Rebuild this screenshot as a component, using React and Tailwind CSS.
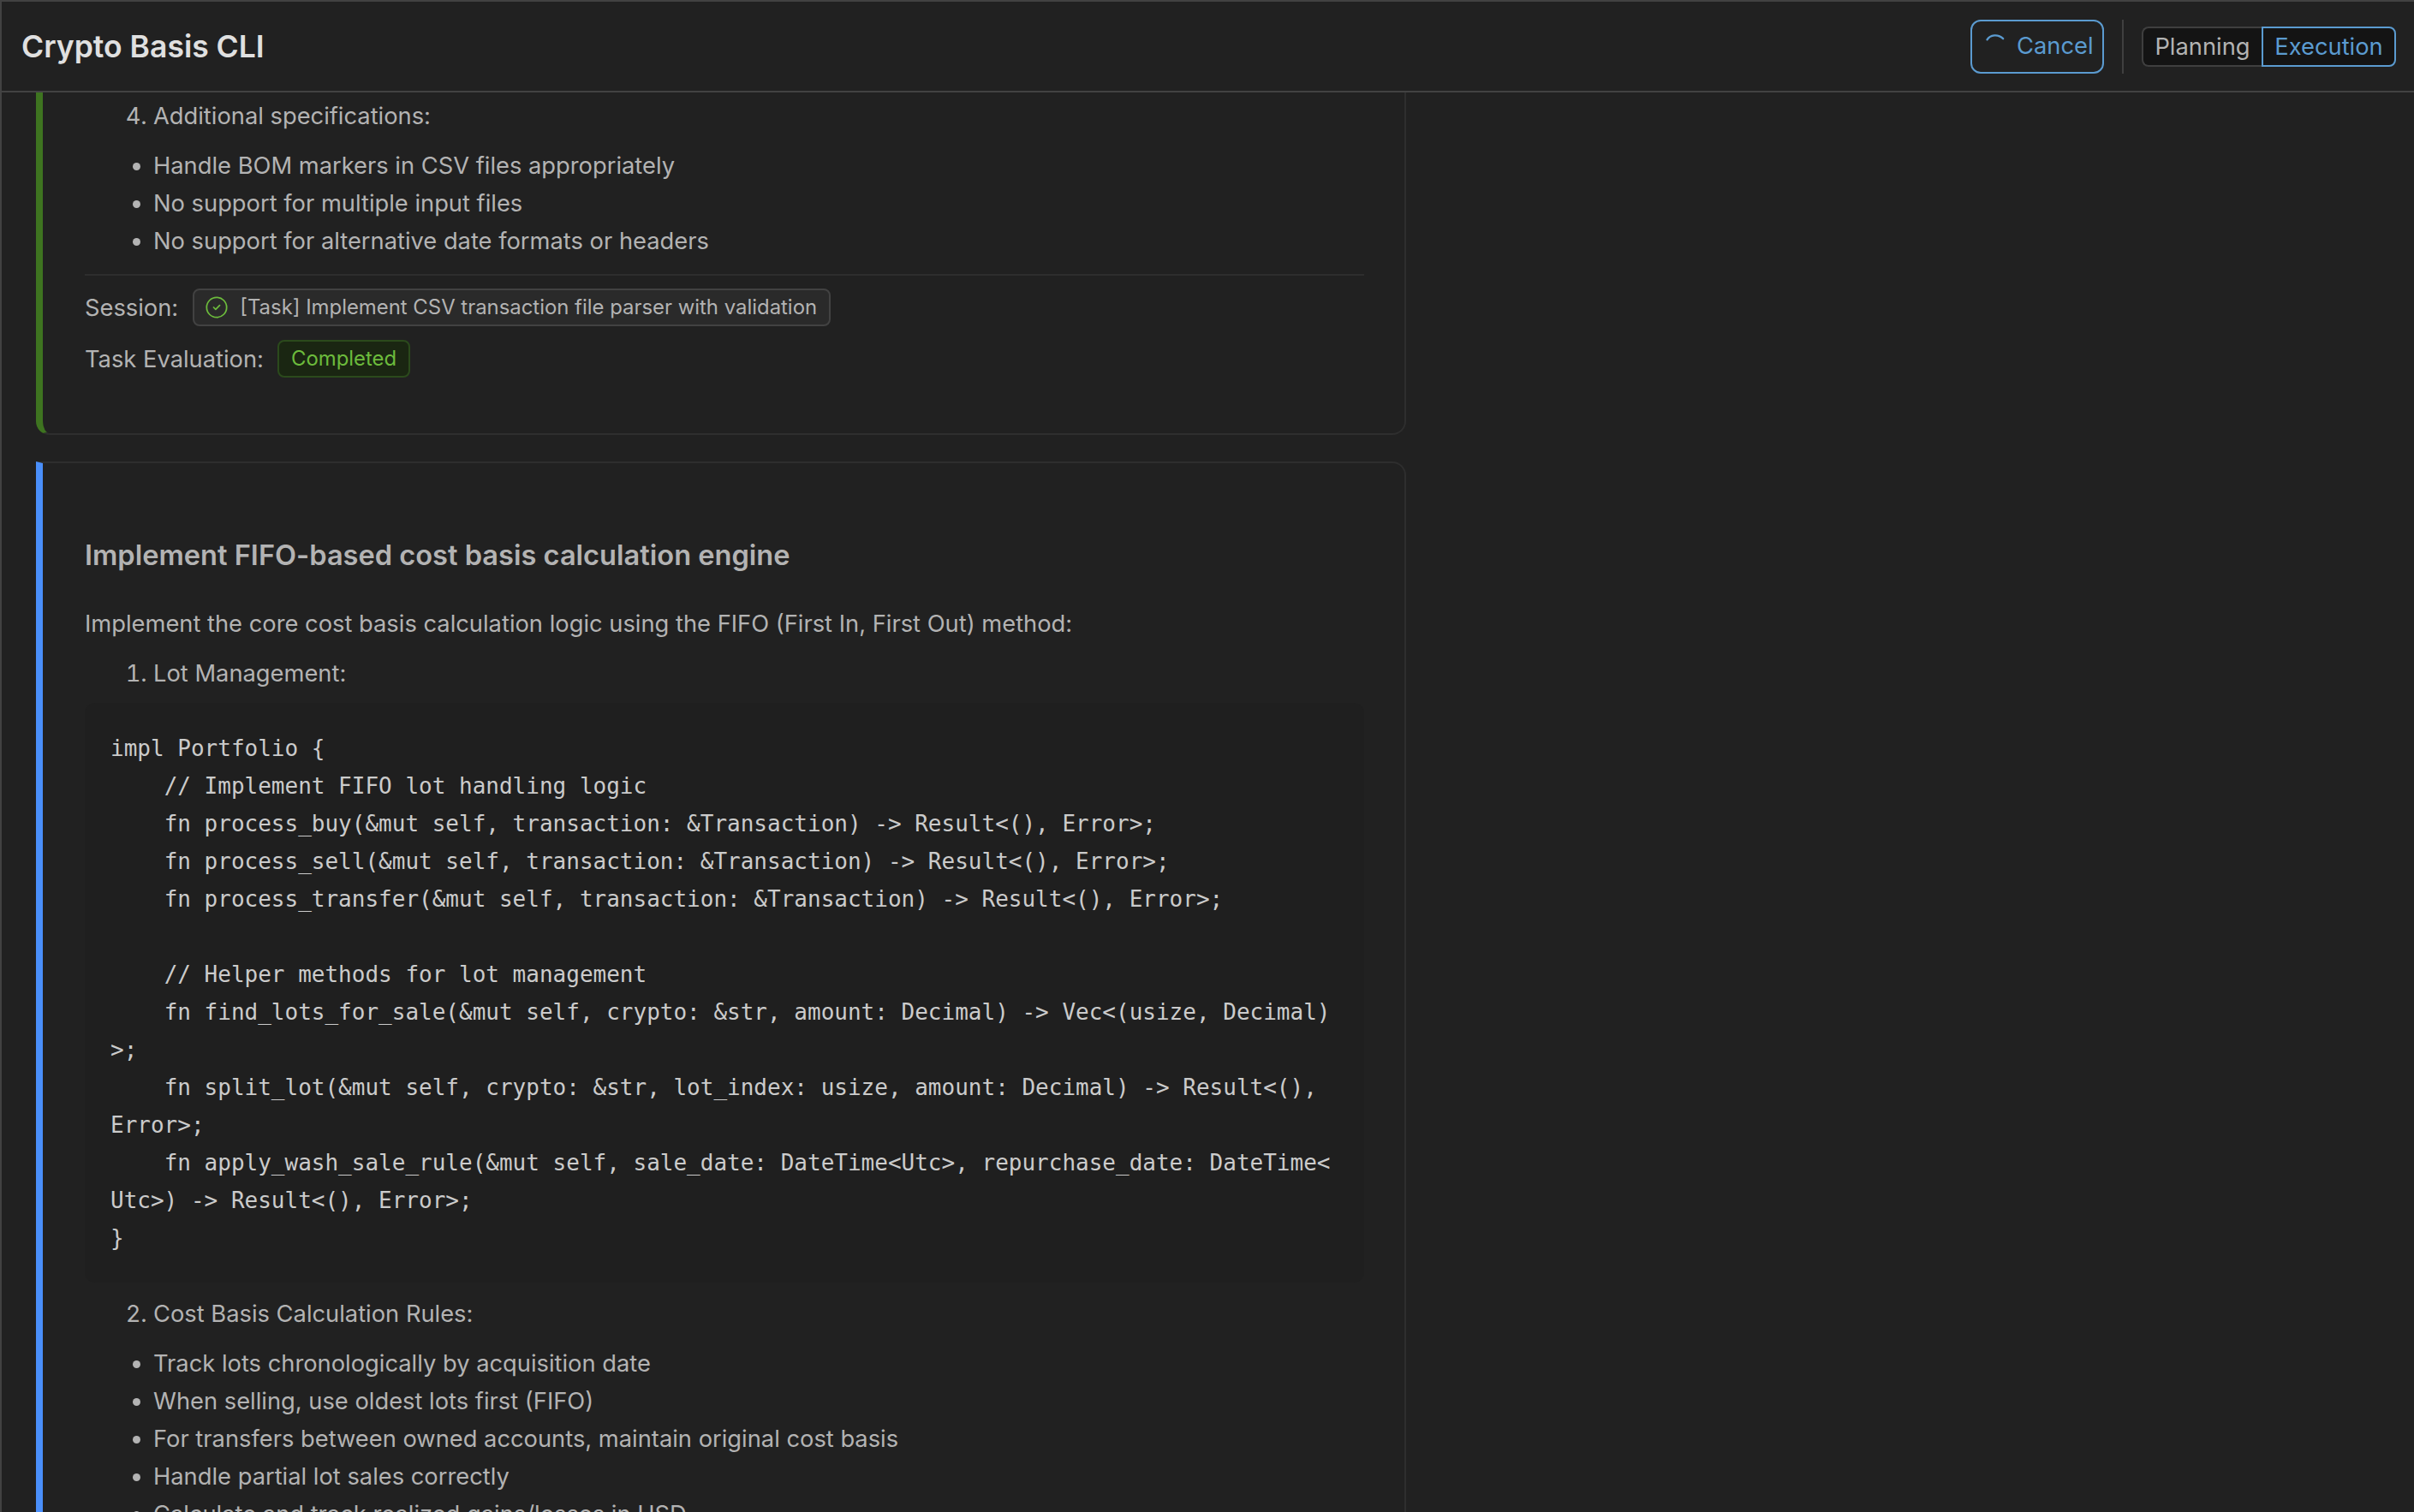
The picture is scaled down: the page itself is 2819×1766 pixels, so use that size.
import React from 'react';
import { CircleCheck } from 'lucide-react';

const CODE = `impl Portfolio {
    // Implement FIFO lot handling logic
    fn process_buy(&mut self, transaction: &Transaction) -> Result<(), Error>;
    fn process_sell(&mut self, transaction: &Transaction) -> Result<(), Error>;
    fn process_transfer(&mut self, transaction: &Transaction) -> Result<(), Error>;

    // Helper methods for lot management
    fn find_lots_for_sale(&mut self, crypto: &str, amount: Decimal) -> Vec<(usize, Decimal)>;
    fn split_lot(&mut self, crypto: &str, lot_index: usize, amount: Decimal) -> Result<(), Error>;
    fn apply_wash_sale_rule(&mut self, sale_date: DateTime<Utc>, repurchase_date: DateTime<Utc>) -> Result<(), Error>;
}`;

const specs = [
  'Handle BOM markers in CSV files appropriately',
  'No support for multiple input files',
  'No support for alternative date formats or headers',
];

const rules = [
  'Track lots chronologically by acquisition date',
  'When selling, use oldest lots first (FIFO)',
  'For transfers between owned accounts, maintain original cost basis',
  'Handle partial lot sales correctly',
  'Calculate and track realized gains/losses in USD',
];

const Bullets = ({ items, className }) => (
  <ul className={`list-disc pl-[80px] ${className}`}>
    {items.map((item) => (
      <li key={item}>{item}</li>
    ))}
  </ul>
);

const Header = () => (
  <header className="flex h-[106px] shrink-0 items-center justify-between border-b-2 border-[#424242] pl-[23px] pr-[21px]">
    <h1 className="pt-[2px] text-[35.5px] font-semibold text-[#e0e0e0]">Crypto Basis CLI</h1>
    <div className="flex items-center">
      <button className="flex h-[63px] w-[156px] items-center gap-[10px] rounded-[12px] border-2 border-[#5b9bd0] pl-[14px] text-[#5b9bd0]">
        <svg width="28" height="28" viewBox="0 0 24 24" fill="none" stroke="#5b9bd0" strokeWidth="2" strokeLinecap="round" className="-mt-[6px]">
          <path d="M3 8 C6 3 14 2 19 7" />
        </svg>
        Cancel
      </button>
      <div className="mx-[21px] h-[63px] w-[2px] bg-[#3f3f3f]" />
      <div className="flex h-[47px]">
        <button className="w-[140px] rounded-l-[8px] border-2 border-r-0 border-[#3f3f3f] bg-[#141414] text-[#b3b3b3]">Planning</button>
        <button className="w-[157px] rounded-r-[8px] border-2 border-[#5b9bd0] bg-[#141414] text-[#5b9bd0]">Execution</button>
      </div>
    </div>
  </header>
);

const App = () => (
  <div className="flex h-[1766px] flex-col overflow-hidden border-l-[2px] border-t-2 border-[#424242] bg-[#212121] font-['Inter',sans-serif] text-[27.3px] leading-[44px] text-[#b3b3b3]">
    <Header />

    <main className="flex-1 overflow-hidden pl-[40px]">
      {/* Finished task, scrolled past its top */}
      <section className="w-[1600px] rounded-b-[16px] border-2 border-t-0 border-[#2e2e2e] border-l-[8px] border-l-[#3e7420] pb-[65px] pl-[49px] pr-[47px] pt-[6px]">
        <ol start={4} className="list-decimal pl-[80px]">
          <li>Additional specifications:</li>
        </ol>
        <Bullets items={specs} className="mt-[14px]" />
        <div className="mt-[16px] h-[2px] bg-[#2e2e2e]" />
        <div className="mt-[15px] flex h-[44px] items-center gap-[17px]">
          <span className="pt-[2px]">Session:</span>
          <span className="flex h-[44px] items-center gap-[13px] rounded-[8px] border-2 border-[#424242] bg-[#2a2a2a] pl-[12px] pr-[14px] text-[23.9px]">
            <CircleCheck size={28} strokeWidth={1.5} className="text-[#6cbb3c]" />
            [Task] Implement CSV transaction file parser with validation
          </span>
        </div>
        <div className="mt-[16px] flex h-[44px] items-center gap-[16px]">
          <span className="pt-[2px]">Task Evaluation:</span>
          <span className="flex h-[44px] items-center rounded-[8px] border-2 border-[#2b4a1c] bg-[#1a2612] px-[14px] text-[23.9px] text-[#6cbb3c]">
            Completed
          </span>
        </div>
      </section>

      {/* Task in progress */}
      <section className="mt-[31px] w-[1600px] rounded-tr-[16px] border-2 border-b-0 border-[#2e2e2e] border-l-[8px] border-l-[#4a8ffa] pl-[49px] pr-[47px] pt-[85px]">
        <h2 className="text-[32.6px] font-semibold text-[#b3b3b3]">Implement FIFO-based cost basis calculation engine</h2>
        <p className="mt-[37px]">Implement the core cost basis calculation logic using the FIFO (First In, First Out) method:</p>
        <ol start={1} className="mt-[14px] list-decimal pl-[80px]">
          <li>Lot Management:</li>
        </ol>
        <pre className="mt-[12px] whitespace-pre-wrap break-all rounded-[12px] bg-[#1f1f1f] px-[30px] pb-[30px] pt-[31px] font-['DejaVu_Sans_Mono',monospace] text-[26px] leading-[44px] text-[#cbcbcb]">
          {CODE}
        </pre>
        <ol start={2} className="mt-[15px] list-decimal pl-[80px]">
          <li>Cost Basis Calculation Rules:</li>
        </ol>
        <Bullets items={rules} className="mt-[14px]" />
      </section>
    </main>
  </div>
);

export default App;
